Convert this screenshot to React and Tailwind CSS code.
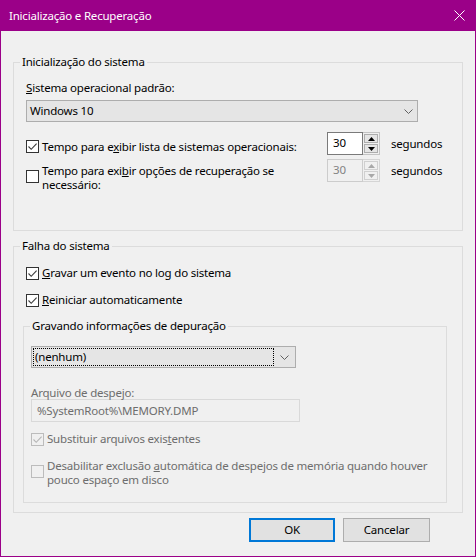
import React from "react";

function Check({ checked, disabled, className = "" }) {
  return (
    <span
      className={
        "w-[13px] h-[13px] border shrink-0 flex items-center justify-center " +
        (disabled ? "border-[#bcbcbc] bg-[#f0f0f0] " : "border-[#333333] bg-white ") +
        className
      }
    >
      {checked && (
        <svg width="11" height="11" viewBox="0 0 11 11">
          <path
            d="M1.5 5.5 L4.2 8.3 L9.6 2.6"
            fill="none"
            stroke={disabled ? "#b5b5b5" : "#3c3c3c"}
            strokeWidth="1.1"
          />
        </svg>
      )}
    </span>
  );
}

function Tri({ up, color }) {
  return (
    <svg width="7" height="4" viewBox="0 0 7 4">
      {up ? <path d="M0 4 L3.5 0 L7 4 Z" fill={color} /> : <path d="M0 0 L3.5 4 L7 0 Z" fill={color} />}
    </svg>
  );
}

function Spin({ disabled }) {
  const tri = disabled ? "#a8a8a8" : "#000000";
  return (
    <div className="flex w-[53px] h-[23px] shrink-0">
      <div
        className={
          "w-[36px] h-full border pl-[5px] leading-[20px] " +
          (disabled ? "border-[#cccccc] bg-[#f0f0f0] text-[#838383]" : "border-[#7a7a7a] bg-white text-black")
        }
      >
        30
      </div>
      <div
        className={
          "w-[17px] h-full border border-l-0 p-[1px] flex flex-col gap-[1px] " +
          (disabled ? "border-[#d5d5d5]" : "border-[#c4c4c4]")
        }
      >
        <div
          className={
            "flex-1 border flex items-center justify-center " +
            (disabled ? "border-[#d0d0d0] bg-[#f0f0f0]" : "border-[#adadad] bg-[#e5e5e5]")
          }
        >
          <Tri up color={tri} />
        </div>
        <div
          className={
            "flex-1 border flex items-center justify-center " +
            (disabled ? "border-[#d0d0d0] bg-[#f0f0f0]" : "border-[#adadad] bg-[#e5e5e5]")
          }
        >
          <Tri color={tri} />
        </div>
      </div>
    </div>
  );
}

function Chevron() {
  return (
    <svg width="9" height="5" viewBox="0 0 9 5">
      <path d="M0.5 0.5 L4.5 4.5 L8.5 0.5" fill="none" stroke="#606060" strokeWidth="1" />
    </svg>
  );
}

export default function App() {
  return (
    <div className="w-[476px] h-[557px] bg-[#9b0088] flex flex-col px-[1px] pb-[1px] font-['Noto_Sans',sans-serif] tracking-[-0.2px] whitespace-nowrap">
      <div className="h-[31px] shrink-0 flex items-center justify-between pl-[8px] pr-[10px] text-white text-[11.5px]">
        <span>Inicialização e Recuperação</span>
        <svg width="11" height="11" viewBox="0 0 11 11">
          <path d="M0.5 0.5 L10.5 10.5 M10.5 0.5 L0.5 10.5" stroke="#ffffff" strokeWidth="1" />
        </svg>
      </div>
      <div className="flex-1 bg-[#f0f0f0] flex flex-col text-[11.5px] text-black leading-[16px]">
        {/* Group 1 */}
        <fieldset className="ml-[12px] mt-[23px] w-[450px] h-[177px] border border-[#dcdcdc] px-[12px]">
          <legend className="-ml-[6px] px-[2px] leading-[16px]">Inicialização do sistema</legend>
          <div className="mt-[10px]">
            <span className="underline">S</span>istema operacional padrão:
          </div>
          <div className="mt-[4px] w-[392px] h-[22px] border border-[#adadad] bg-[#e5e5e5] flex items-center justify-between pl-[3px] pr-[4px]">
            <span>Windows 10</span>
            <Chevron />
          </div>
          <div className="mt-[10px] flex items-start">
            <label className="w-[301px] flex items-start gap-[3px] pt-[7px]">
              <Check checked className="mt-[1px]" />
              <span>
                Tempo para e<span className="underline">x</span>ibir lista de sistemas operacionais:
              </span>
            </label>
            <Spin />
            <span className="ml-[11px] leading-[23px]">segundos</span>
          </div>
          <div className="mt-[4px] flex items-start">
            <label className="w-[301px] flex items-start gap-[3px] pt-[5px]">
              <Check className="mt-[6px]" />
              <span className="leading-[14px]">
                Tempo para exi<span className="underline">b</span>ir opções de recuperação se
                <br />
                necessário:
              </span>
            </label>
            <Spin disabled />
            <span className="ml-[11px] leading-[23px]">segundos</span>
          </div>
        </fieldset>

        {/* Group 2 */}
        <fieldset className="ml-[12px] mt-[7px] w-[450px] h-[275px] border border-[#dcdcdc] px-[12px]">
          <legend className="-ml-[6px] px-[2px] leading-[16px]">Falha do sistema</legend>
          <label className="mt-[11px] flex items-start gap-[3px]">
            <Check checked className="mt-[2px]" />
            <span>
              <span className="underline">G</span>ravar um evento no log do sistema
            </span>
          </label>
          <label className="mt-[11px] flex items-start gap-[3px]">
            <Check checked className="mt-[2px]" />
            <span>
              <span className="underline">R</span>einiciar automaticamente
            </span>
          </label>

          <fieldset className="-ml-[3px] mt-[10px] w-[424px] h-[185px] border border-[#dcdcdc] px-[7px]">
            <legend className="-ml-[1px] px-[2px] leading-[16px]">Gravando informações de depuração</legend>
            <div className="mt-[12px] w-[265px] h-[22px] border border-[#adadad] bg-[#e5e5e5] flex items-center p-[1px]">
              <div className="flex-1 h-full border border-dotted border-black flex items-center pl-[1px]">
                (nenhum)
              </div>
              <div className="w-[20px] flex justify-center">
                <Chevron />
              </div>
            </div>
            <div className="mt-[18px] leading-[14px] text-[#6d6d6d]">Arquivo de despejo:</div>
            <div className="-mt-[1px] w-[269px] h-[23px] border border-[#d9d9d9] bg-[#f0f0f0] text-[#6d6d6d] pl-[5px] leading-[21px]">
              %SystemRoot%\MEMORY.DMP
            </div>
            <label className="mt-[9px] flex items-start gap-[3px] text-[#6d6d6d]">
              <Check checked disabled className="mt-[2px]" />
              <span>
                Substituir arquivos exis<span className="underline">t</span>entes
              </span>
            </label>
            <label className="mt-[12px] flex items-start gap-[3px] text-[#6d6d6d]">
              <Check disabled className="mt-[6px]" />
              <span className="leading-[14px]">
                Desabilitar exclusão <span className="underline">a</span>utomática de despejos de memória quando houver
                <br />
                pouco espaço em disco
              </span>
            </label>
          </fieldset>
        </fieldset>

        <div className="mt-[5px] flex justify-end gap-[8px] pr-[45px]">
          <button className="w-[86px] h-[24px] border-2 border-[#0078d7] bg-[#e1e1e1] flex items-center justify-center">
            OK
          </button>
          <button className="w-[87px] h-[24px] border border-[#adadad] bg-[#e1e1e1] flex items-center justify-center">
            Cancelar
          </button>
        </div>
      </div>
    </div>
  );
}
